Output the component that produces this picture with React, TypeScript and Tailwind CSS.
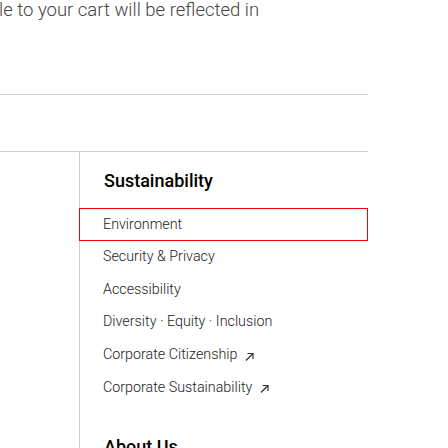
const items: { label: string; external?: boolean; active?: boolean }[] = [
  { label: 'Environment', active: true },
  { label: 'Security & Privacy' },
  { label: 'Accessibility' },
  { label: 'Diversity · Equity · Inclusion' },
  { label: 'Corporate Citizenship', external: true },
  { label: 'Corporate Sustainability', external: true },
]

function ExtArrow() {
  return (
    <svg width="11" height="11" viewBox="0 0 11 11" className="ml-[7px] mt-[3px]" fill="none" stroke="#333" strokeWidth="1.2">
      <path d="M2 9.5 L9 2.5" />
      <path d="M3.5 2.5 H9 V8" />
    </svg>
  )
}

export default function App() {
  return (
    <div className="w-[448px] h-[448px] overflow-hidden bg-white font-['Roboto',sans-serif]">
      <p className="h-[20px] text-[18.5px] leading-[20px] font-light text-[#444] whitespace-nowrap -ml-px">le to your cart will be reflected in</p>
      <div className="w-[368px] mt-[74px] h-[57px] border-t border-[#d0d0d0]" />
      <div className="w-[368px] flex border-t border-[#d0d0d0]">
        <div className="w-[80px] shrink-0 border-r border-[#d0d0d0] h-[400px]" />
        <div className="flex-1">
          <h3 className="pl-[24px] pt-[18px] h-[56px] text-[18px] leading-[22px] font-medium text-black">Sustainability</h3>
          <ul>
            {items.map((it) => (
              <li
                key={it.label}
                className={
                  'flex items-center pl-[23px] h-[32.6px] text-[14.3px] font-light text-[#222] ' +
                  (it.active ? 'border border-[#ff0000] -ml-px' : '')
                }
              >
                {it.label}
                {it.external && <ExtArrow />}
              </li>
            ))}
          </ul>
          <h3 className="pl-[24px] mt-[32px] text-[18px] leading-[22px] font-medium text-black">About Us</h3>
        </div>
      </div>
    </div>
  )
}
